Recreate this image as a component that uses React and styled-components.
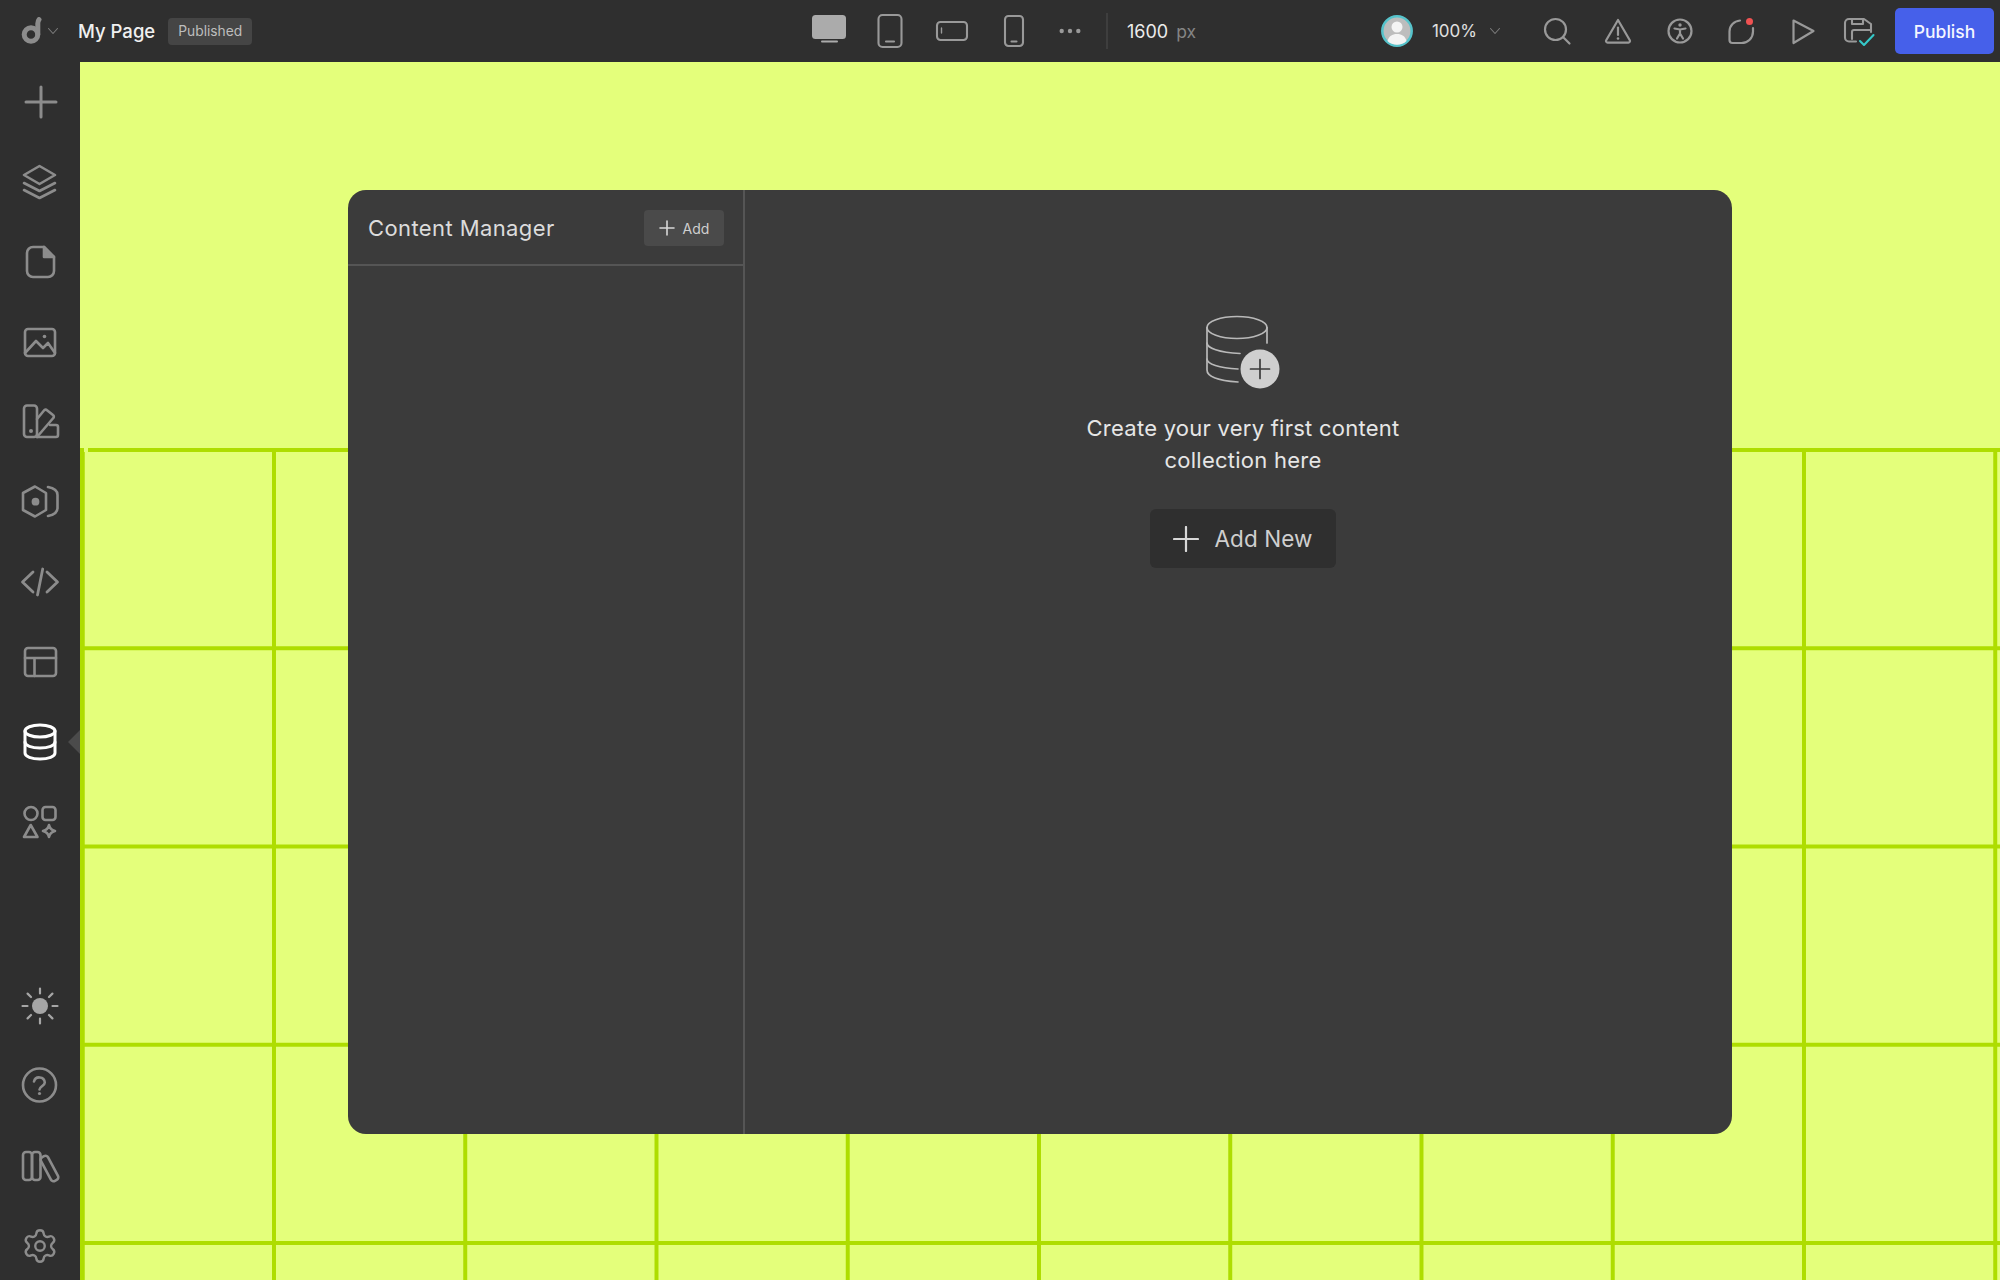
import React from 'react';
import styled, { createGlobalStyle } from 'styled-components';
import { Settings } from 'lucide-react';

const GlobalStyle = createGlobalStyle`
  html, body {
    margin: 0;
    padding: 0;
    background: #2f2f2f;
    overflow: hidden;
  }
  * {
    box-sizing: border-box;
  }
`;

const Page = styled.div`
  width: 2000px;
  height: 1280px;
  display: flex;
  flex-direction: column;
  overflow: hidden;
  font-family: Inter, "Liberation Sans", sans-serif;
  color: #e8e8e8;
`;

const TopBar = styled.header`
  flex: 0 0 62px;
  display: flex;
  align-items: center;
  background: #2f2f2f;
`;

const BrandGroup = styled.div`
  flex: 0 0 798px;
  display: flex;
  align-items: center;
  padding-left: 20px;
`;

const LogoChevron = styled.span`
  margin-left: 4px;
  display: flex;
`;

const PageName = styled.span`
  margin-left: 20px;
  font-size: 18.5px;
  font-weight: 500;
  color: #f0f0f0;
`;

const StatusBadge = styled.span`
  margin-left: 13px;
  height: 27px;
  padding: 0 10px;
  display: flex;
  align-items: center;
  border-radius: 4px;
  background: #454545;
  font-size: 13.8px;
  color: #bdbdbd;
`;

const DeviceGroup = styled.div`
  display: flex;
  align-items: center;
`;

const ToolSlot = styled.div`
  width: ${props => props.$width || 61}px;
  height: 46px;
  display: flex;
  align-items: center;
  justify-content: center;
`;

const Divider = styled.div`
  width: 2px;
  height: 36px;
  margin-left: 11px;
  background: #3e3e3e;
`;

const WidthValue = styled.span`
  margin-left: 19px;
  font-size: 18px;
  color: #ececec;
`;

const WidthUnit = styled.span`
  margin-left: 8px;
  font-size: 17.5px;
  color: #858585;
`;

const ActionGroup = styled.div`
  margin-left: auto;
  padding-right: 6px;
  display: flex;
  align-items: center;
`;

const ZoomValue = styled.span`
  margin-left: 19px;
  margin-right: 12px;
  font-size: 17px;
  color: #e0e0e0;
`;

const ZoomChevron = styled.span`
  margin-right: 25px;
  display: flex;
`;

const PublishButton = styled.button`
  width: 99px;
  height: 46px;
  margin-left: 10px;
  border: 0;
  border-radius: 5px;
  background: #4660ea;
  font-family: inherit;
  font-size: 17.5px;
  font-weight: 500;
  color: #f4f6ff;
`;

const Body = styled.div`
  flex: 1;
  display: flex;
  min-height: 0;
`;

const SideBar = styled.nav`
  flex: 0 0 80px;
  display: flex;
  flex-direction: column;
  background: #2f2f2f;
`;

const SideGroup = styled.div`
  display: flex;
  flex-direction: column;
  margin-top: ${props => props.$offset || 0}px;
`;

const SideItem = styled.div`
  position: relative;
  flex: 0 0 80px;
  display: flex;
  align-items: center;
  justify-content: center;
`;

const ActiveCaret = styled.span`
  position: absolute;
  right: 0;
  top: 28px;
  border-style: solid;
  border-width: 12px 12px 12px 0;
  border-color: transparent #4b4b4b transparent transparent;
`;

const Canvas = styled.main`
  position: relative;
  flex: 1;
  display: flex;
  flex-direction: column;
  background: #e4ff7b;
`;

const GridPattern = styled.div`
  position: relative;
  margin-top: 386px;
  flex: 1;
  border-left: 4px solid #aedd00;
  background-image:
    linear-gradient(to right, #aedd00 4px, transparent 4px),
    linear-gradient(to bottom, #aedd00 4px, transparent 4px);
  background-size: 191.25px 198.25px;
  background-position: 188px 0, 0 0;

  &::before {
    content: '';
    position: absolute;
    left: 0;
    top: 0;
    width: 4px;
    height: 4px;
    background: #e4ff7b;
  }
`;

const Panel = styled.section`
  position: absolute;
  left: 268px;
  top: 128px;
  width: 1384px;
  height: 944px;
  display: flex;
  border-radius: 18px;
  background: #3b3b3b;
  overflow: hidden;
`;

const CollectionColumn = styled.div`
  flex: 0 0 397px;
  border-right: 2px solid #555;
`;

const ColumnHeader = styled.div`
  height: 76px;
  padding: 2px 19px 0 20px;
  display: flex;
  align-items: center;
  justify-content: space-between;
  border-bottom: 2px solid #555;
`;

const ColumnTitle = styled.h2`
  margin: 0;
  font-size: 22px;
  font-weight: 400;
  letter-spacing: 0.4px;
  color: #dcdcdc;
`;

const SmallAddButton = styled.button`
  width: 80px;
  height: 36px;
  display: flex;
  align-items: center;
  justify-content: center;
  gap: 8px;
  border: 0;
  border-radius: 4px;
  background: #4a4a4a;
  font-family: inherit;
  font-size: 14px;
  color: #cfcfcf;
`;

const EmptyState = styled.div`
  flex: 1;
  padding: 125px 0 0 9px;
  display: flex;
  flex-direction: column;
  align-items: center;
`;

const EmptyText = styled.p`
  margin: 21px 0 33px;
  font-size: 22px;
  line-height: 32px;
  letter-spacing: 0.25px;
  text-align: center;
  color: #e6e6e6;
`;

const AddNewButton = styled.button`
  width: 186px;
  height: 59px;
  display: flex;
  align-items: center;
  justify-content: center;
  gap: 15px;
  border: 0;
  border-radius: 6px;
  background: #2f2f2f;
  font-family: inherit;
  font-size: 22.5px;
  letter-spacing: 0.1px;
  color: #cfcfcf;
`;

const Svg = styled.svg`
  display: block;
  flex: none;
  fill: none;
  stroke: ${props => props.$color || '#8c8c8c'};
  stroke-width: ${props => props.$weight || 2.6};
  stroke-linecap: round;
  stroke-linejoin: round;
`;

const Icon = ({ size = 40, box, color, weight, children }) => (
  <Svg width={size} height={size} viewBox={box || `0 0 ${size} ${size}`} $color={color} $weight={weight}>
    {children}
  </Svg>
);

const grey = '#8c8c8c';

const PlusIcon = () => (
  <Icon weight={3}><path d="M6 20H36M21 5V35" /></Icon>
);
const LayersIcon = () => (
  <Icon><path d="M19.5 4 35 13 19.5 22 4 13Z" /><path d="M4 21 19.5 29 35 21M4 28 19.5 36 35 28" /></Icon>
);
const FileIcon = () => (
  <Icon>
    <path d="M13 5H24L34 15V29a6 6 0 0 1-6 6H13a6 6 0 0 1-6-6V11a6 6 0 0 1 6-6Z" />
    <path d="M24 5V15H34Z" fill={grey} />
  </Icon>
);
const ImageIcon = () => (
  <Icon>
    <rect x="5" y="7" width="30" height="27" rx="3" />
    <path d="M5 31 16 19 23 26 28 21 35 31" />
    <circle cx="24.5" cy="14.5" r="1.8" fill={grey} stroke="none" />
  </Icon>
);
const SwatchIcon = () => (
  <Icon>
    <rect x="4" y="3.5" width="13" height="31.5" rx="3" />
    <circle cx="11" cy="29" r="2" fill={grey} stroke="none" />
    <path d="M17 17 24 8.5a2 2 0 0 1 3-.3L33 13a2 2 0 0 1 .3 3L17 35" />
    <path d="M30 23H36a2 2 0 0 1 2 2V33a2 2 0 0 1-2 2H17" />
  </Icon>
);
const PluginIcon = () => (
  <Icon>
    <path d="M15 4.5 26 11V28L15 34.5 3 28V11Z" />
    <circle cx="15.5" cy="19.7" r="2.6" fill={grey} />
    <path d="M28 5C34 6 37.5 9 37.5 13V26C37.5 30 34 33 28 34" />
  </Icon>
);
const CodeIcon = () => (
  <Icon weight={2.8}><path d="M13 10 2.5 20 13 30M27 10 37.5 20 27 30M22.7 7 17.5 33" /></Icon>
);
const LayoutIcon = () => (
  <Icon>
    <rect x="5" y="6" width="31" height="28" rx="3" />
    <path d="M5 16H36M14.5 16V34" />
  </Icon>
);
const DatabaseIcon = () => (
  <Icon color="#fff" weight={3}>
    <ellipse cx="20" cy="9" rx="15" ry="6" />
    <path d="M5 9V31C5 34.5 11.7 37 20 37S35 34.5 35 31V9" />
    <path d="M5 20C5 23.5 11.7 26 20 26S35 23.5 35 20" />
  </Icon>
);
const ShapesIcon = () => (
  <Icon>
    <circle cx="11" cy="11.5" r="6.5" />
    <rect x="22.5" y="5" width="13" height="13" rx="3" />
    <path d="M10.7 23 17.5 35H4Z" />
    <path d="M29 23Q30 27.8 35 29 30 30.2 29 35 28 30.2 23 29 28 27.8 29 23Z" />
  </Icon>
);
const SunIcon = () => (
  <Icon color="#a6a6a6" weight={2.2}>
    <circle cx="20" cy="20" r="8" fill="#a6a6a6" stroke="none" />
    <path d="M20 2.5V7.5M20 32.5V37.5M2.5 20H7.5M32.5 20H37.5M7.6 7.6 11 11M29 29 32.4 32.4M7.6 32.4 11 29M29 11 32.4 7.6" />
  </Icon>
);
const HelpIcon = () => (
  <Icon>
    <circle cx="19.5" cy="19" r="16.5" />
    <path d="M14 15.5A5.5 5.5 0 0 1 24.8 16.5C24.8 20 19.5 20.5 19.5 23.5" />
    <circle cx="19.5" cy="27.5" r="1.6" fill={grey} stroke="none" />
  </Icon>
);
const LibraryIcon = () => (
  <Icon>
    <rect x="3" y="6" width="9" height="28" rx="3" />
    <rect x="12" y="6" width="8.5" height="28" rx="3" />
    <rect x="25.5" y="9" width="8" height="27" rx="3" transform="rotate(-28 29.5 22.5)" />
  </Icon>
);

const LogoMark = () => (
  <Svg width="24" height="28" viewBox="0 0 24 28" $color="#8c8c8c" $weight={5}>
    <circle cx="11" cy="17.5" r="6.8" />
    <path d="M17.8 17V6.5C17.8 4.5 18.3 3.4 19 2.6" />
  </Svg>
);

const Chevron = ({ width = 10 }) => (
  <Svg width={width} height="6" viewBox="0 0 10 6" $color="#7b7b7b" $weight={1.1} style={{ overflow: 'visible' }}>
    <path d="M0.5 0.5 5 5.5 9.5 0.5" />
  </Svg>
);

const DesktopDevice = () => (
  <Icon size={38} color="#ababab" weight={2}>
    <rect x="2" y="3" width="34" height="24" rx="3.5" fill="#ababab" stroke="none" />
    <path d="M12 29.5H27" />
  </Icon>
);
const TabletDevice = () => (
  <Icon size={36} color="#999" weight={2.1}>
    <rect x="6.5" y="2" width="23" height="32" rx="4" />
    <path d="M14 28.5H22" />
  </Icon>
);
const LandscapeDevice = () => (
  <Icon size={36} color="#999" weight={2.1}>
    <rect x="3" y="9" width="30" height="18" rx="3.5" />
    <path d="M7.5 15V20" strokeWidth="1.4" />
  </Icon>
);
const PhoneDevice = () => (
  <Icon size={36} color="#999" weight={2.1}>
    <rect x="9" y="3" width="18" height="30" rx="3.5" />
    <path d="M15.5 28.5H20.5" />
  </Icon>
);
const MoreDots = () => (
  <Icon size={28} color="#999">
    <circle cx="5.7" cy="14" r="2.2" fill="#999" stroke="none" />
    <circle cx="14" cy="14" r="2.2" fill="#999" stroke="none" />
    <circle cx="22.3" cy="14" r="2.2" fill="#999" stroke="none" />
  </Icon>
);

const Avatar = () => (
  <Svg width="32" height="32" viewBox="0 0 32 32" $color="#56c3cb" $weight={2.5}>
    <circle cx="16" cy="16" r="14.7" fill="#bdbdbd" />
    <circle cx="16" cy="12" r="5.5" fill="#f4f4f4" stroke="none" />
    <path d="M6.5 26C8 21 11 19 16 19S24 21 25.5 26C23 28.6 19.7 29.8 16 29.8S9 28.6 6.5 26Z" fill="#f4f4f4" stroke="none" />
  </Svg>
);

const SearchIcon = () => (
  <Icon size={30} color="#999" weight={2.2}>
    <circle cx="13.5" cy="13.5" r="10.5" />
    <path d="M21 21 27.5 27.5" />
  </Icon>
);
const WarningIcon = () => (
  <Icon size={30} color="#999" weight={2.2}>
    <path d="M15 4 26.8 24.2a1.6 1.6 0 0 1-1.4 2.4H4.6a1.6 1.6 0 0 1-1.4-2.4Z" />
    <path d="M15 11.5V19" />
    <circle cx="15" cy="22.5" r="1.3" fill="#999" stroke="none" />
  </Icon>
);
const AccessIcon = () => (
  <Icon size={30} color="#999" weight={2.2}>
    <circle cx="15" cy="15" r="11.5" />
    <circle cx="15" cy="9" r="1.7" fill="#999" stroke="none" />
    <path d="M9.5 12.5 15 13.5 20.5 12.5M15 13.5V17.5L12 22.5M15 17.5 18 22.5" />
  </Icon>
);
const CommentIcon = () => (
  <Icon size={30} color="#999" weight={2.2}>
    <path d="M14 4.5C8 5 3.5 9.5 3.5 15.5V24A3 3 0 0 0 6.5 27H15.5C22 27 27 22 27 15.5V12" />
    <circle cx="23.5" cy="5.5" r="3.5" fill="#f05252" stroke="none" />
  </Icon>
);
const PlayIcon = () => (
  <Icon size={30} color="#999" weight={2.2}>
    <path d="M7.5 4.5 27.5 15 7.5 27Z" />
  </Icon>
);
const SavedIcon = () => (
  <Icon size={34} color="#999" weight={2.1}>
    <path d="M15 27.5H8a4 4 0 0 1-4-4V9a4 4 0 0 1 4-4H23L30 10V18" />
    <path d="M11 5V10H22V5M11 25V18A2 2 0 0 1 13 16H30" />
    <path d="M19 27 23 31 32.5 21" stroke="#35c9c9" />
  </Icon>
);

const PlusGlyph = ({ size, color, weight }) => (
  <Icon size={size} color={color} weight={weight}>
    <path d={`M1 ${size / 2}H${size - 1}M${size / 2} 1V${size - 1}`} />
  </Icon>
);

const CollectionIcon = () => (
  <Icon size={76} color="#b9b9b9" weight={1.7}>
    <ellipse cx="32" cy="12.5" rx="30" ry="11" />
    <path d="M62 12.5V28M2 12.5V55C2 61 12 65.5 33 67" />
    <path d="M2 28C2 33 14 37.5 35 38.5M2 44C2 49 14 53 33 54" />
    <circle cx="55" cy="54" r="19.5" fill="#cfcfcf" stroke="none" />
    <path d="M45.5 54H64.5M55 44.5V63.5" stroke="#3b3b3b" />
  </Icon>
);

const topItems = [
  PlusIcon, LayersIcon, FileIcon, ImageIcon, SwatchIcon,
  PluginIcon, CodeIcon, LayoutIcon, DatabaseIcon, ShapesIcon,
];
const bottomItems = [SunIcon, HelpIcon, LibraryIcon];

export default function App() {
  return (
    <Page>
      <GlobalStyle />
      <TopBar>
        <BrandGroup>
          <LogoMark />
          <LogoChevron><Chevron /></LogoChevron>
          <PageName>My Page</PageName>
          <StatusBadge>Published</StatusBadge>
        </BrandGroup>
        <DeviceGroup>
          <ToolSlot><DesktopDevice /></ToolSlot>
          <ToolSlot $width={62}><TabletDevice /></ToolSlot>
          <ToolSlot $width={62}><LandscapeDevice /></ToolSlot>
          <ToolSlot $width={62}><PhoneDevice /></ToolSlot>
          <ToolSlot $width={50}><MoreDots /></ToolSlot>
          <Divider />
          <WidthValue>1600</WidthValue>
          <WidthUnit>px</WidthUnit>
        </DeviceGroup>
        <ActionGroup>
          <Avatar />
          <ZoomValue>100%</ZoomValue>
          <ZoomChevron><Chevron width={12} /></ZoomChevron>
          <ToolSlot><SearchIcon /></ToolSlot>
          <ToolSlot $width={62}><WarningIcon /></ToolSlot>
          <ToolSlot><AccessIcon /></ToolSlot>
          <ToolSlot $width={62}><CommentIcon /></ToolSlot>
          <ToolSlot $width={58}><PlayIcon /></ToolSlot>
          <ToolSlot $width={55}><SavedIcon /></ToolSlot>
          <PublishButton>Publish</PublishButton>
        </ActionGroup>
      </TopBar>
      <Body>
        <SideBar>
          <SideGroup>
            {topItems.map((Item, i) => (
              <SideItem key={i}>
                <Item />
                {Item === DatabaseIcon && <ActiveCaret />}
              </SideItem>
            ))}
          </SideGroup>
          <SideGroup $offset={104}>
            {bottomItems.map((Item, i) => (
              <SideItem key={i}><Item /></SideItem>
            ))}
            <SideItem><Settings size={38} color={grey} strokeWidth={1.5} /></SideItem>
          </SideGroup>
        </SideBar>
        <Canvas>
          <GridPattern />
          <Panel>
            <CollectionColumn>
              <ColumnHeader>
                <ColumnTitle>Content Manager</ColumnTitle>
                <SmallAddButton>
                  <PlusGlyph size={16} color="#d8d8d8" weight={1.6} />
                  Add
                </SmallAddButton>
              </ColumnHeader>
            </CollectionColumn>
            <EmptyState>
              <CollectionIcon />
              <EmptyText>
                Create your very first content
                <br />
                collection here
              </EmptyText>
              <AddNewButton>
                <PlusGlyph size={26} color="#d8d8d8" weight={2.2} />
                Add New
              </AddNewButton>
            </EmptyState>
          </Panel>
        </Canvas>
      </Body>
    </Page>
  );
}
